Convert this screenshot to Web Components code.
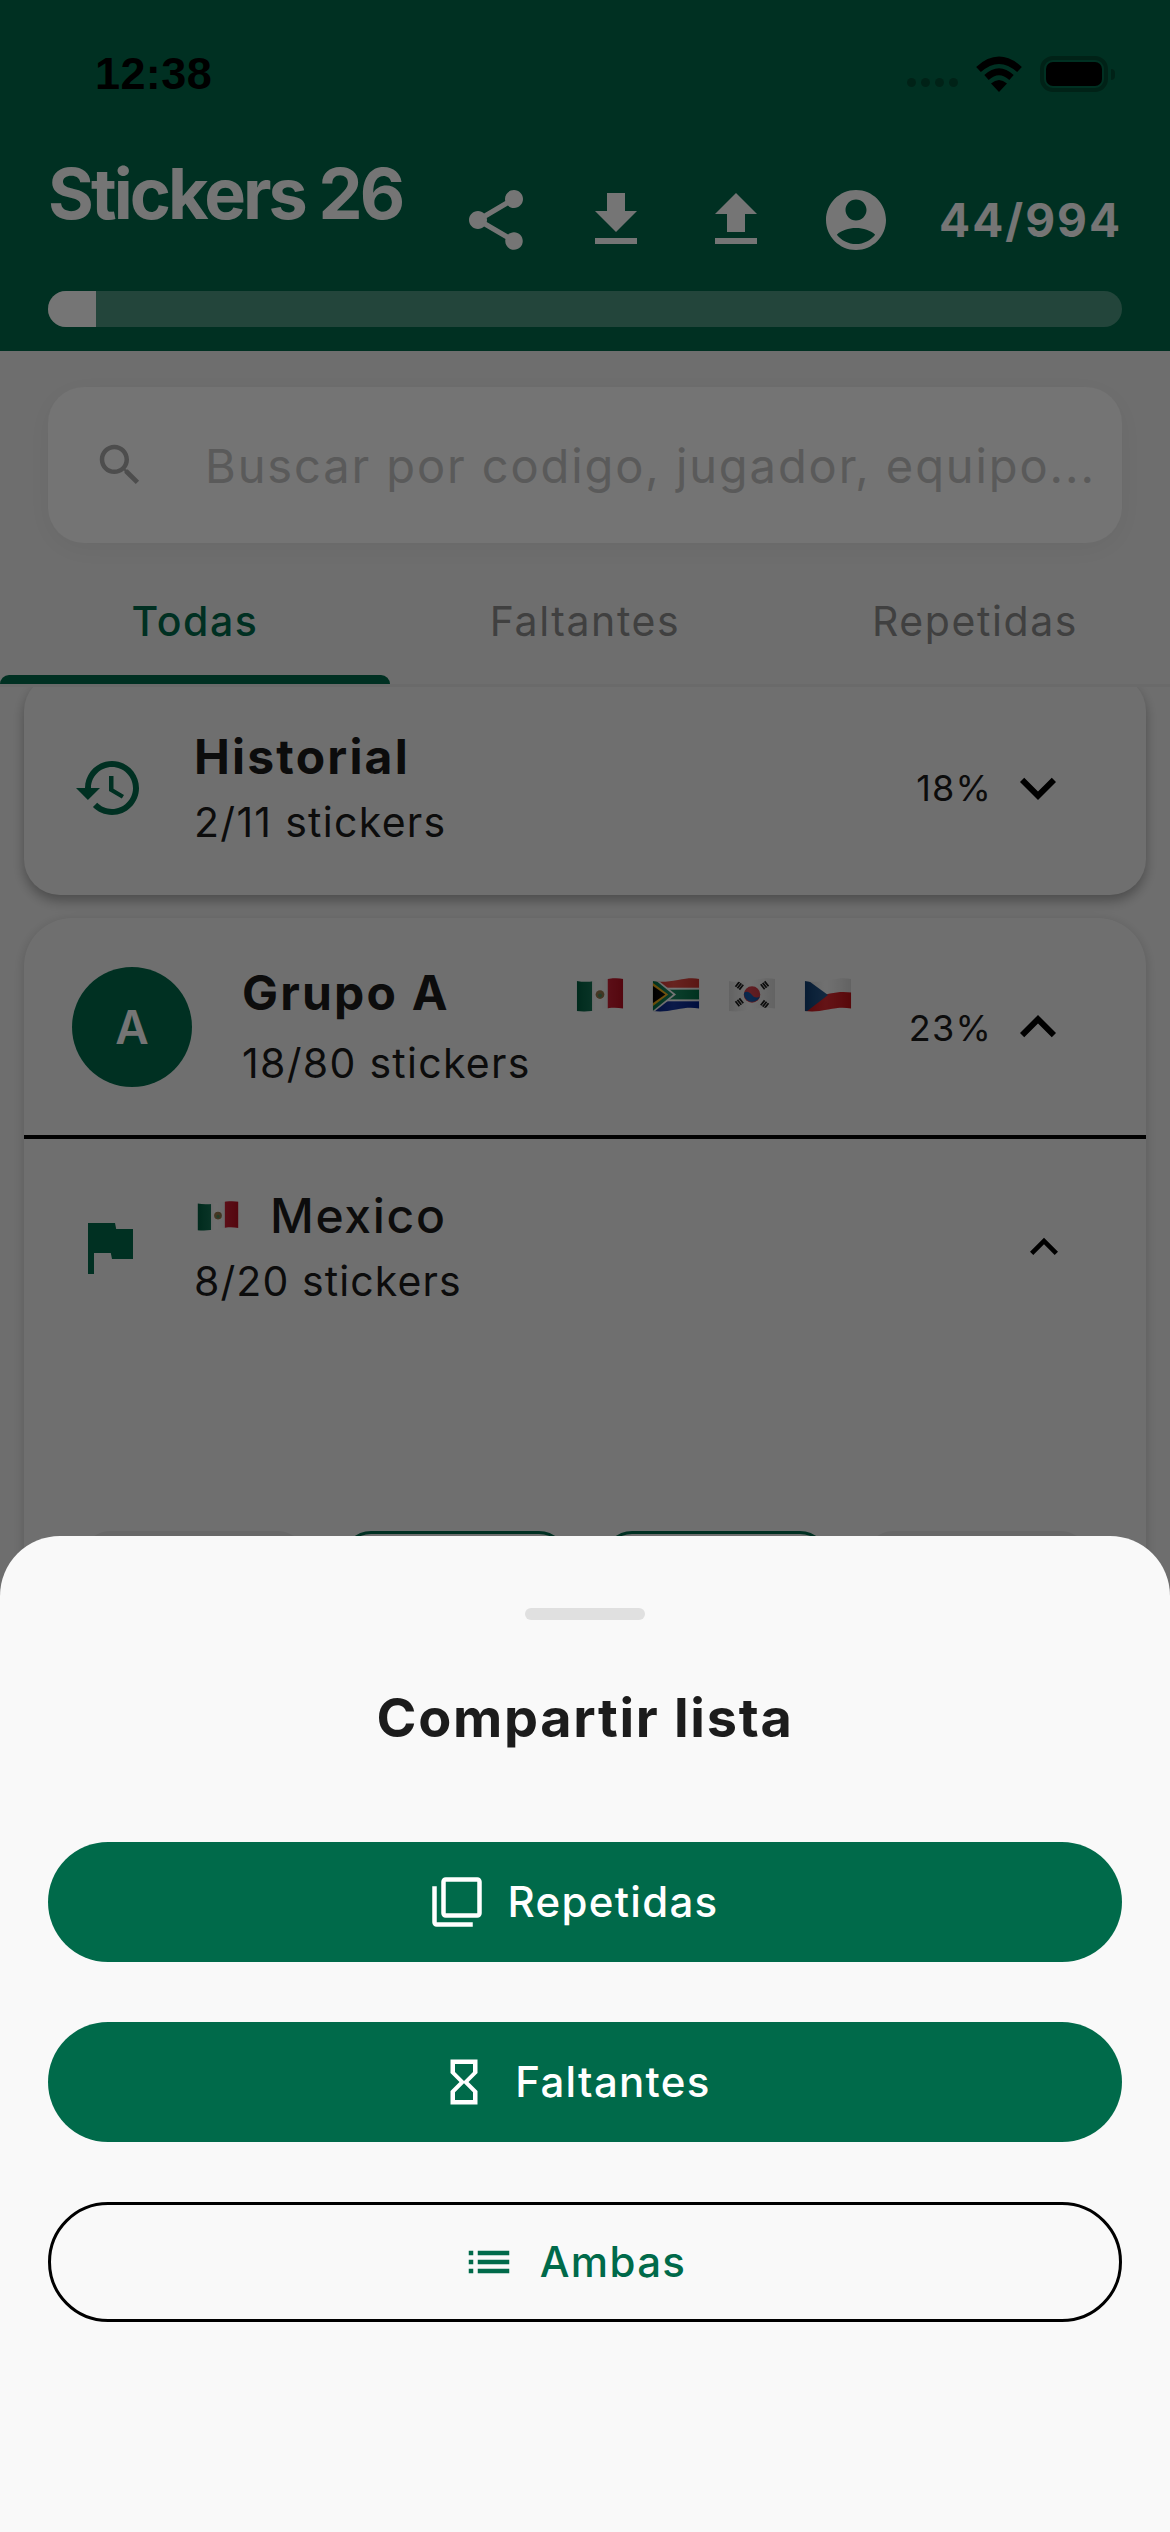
<!DOCTYPE html>
<html lang="es">
<head>
<meta charset="utf-8">
<title>Stickers 26</title>
<style>
  html, body { margin: 0; padding: 0; background: #f0f0f0; }
  body { font-family: Inter, "Liberation Sans", sans-serif; }
  #phone { position: relative; width: 1170px; height: 2532px; overflow: hidden; }
</style>
</head>
<body>
<div id="phone">
  <app-header title="Stickers 26" count="44/994" progress="48"></app-header>
  <search-field placeholder="Buscar por codigo, jugador, equipo..."></search-field>
  <tab-bar tabs="Todas,Faltantes,Repetidas"></tab-bar>
  <sticker-list>
    <history-card title="Historial" sub="2/11 stickers" pct="18%"></history-card>
    <group-card letter="A" title="Grupo A" sub="18/80 stickers" pct="23%">
      <flag-emoji slot="flags" code="mx"></flag-emoji>
      <flag-emoji slot="flags" code="za"></flag-emoji>
      <flag-emoji slot="flags" code="kr"></flag-emoji>
      <flag-emoji slot="flags" code="cz"></flag-emoji>
      <team-section title="Mexico" sub="8/20 stickers"></team-section>
    </group-card>
  </sticker-list>
  <dim-scrim></dim-scrim>
  <share-sheet title="Compartir lista">
    <sheet-button icon="filter_none" kind="filled">Repetidas</sheet-button>
    <sheet-button icon="hourglass" kind="filled">Faltantes</sheet-button>
    <sheet-button icon="list" kind="outlined">Ambas</sheet-button>
  </share-sheet>
</div>

<script>
const ICONS = {
  share: "M18 16.08c-.76 0-1.44.3-1.96.77L8.91 12.7c.05-.23.09-.46.09-.7s-.04-.47-.09-.7l7.05-4.11c.54.5 1.25.81 2.04.81 1.66 0 3-1.34 3-3s-1.34-3-3-3-3 1.34-3 3c0 .24.04.47.09.7L8.04 9.81C7.5 9.31 6.79 9 6 9c-1.66 0-3 1.34-3 3s1.34 3 3 3c.79 0 1.5-.31 2.04-.81l7.12 4.16c-.05.21-.08.43-.08.65 0 1.61 1.31 2.92 2.92 2.92s2.92-1.31 2.92-2.92-1.31-2.92-2.92-2.92z",
  download: "M19 9h-4V3H9v6H5l7 7 7-7zM5 18v2h14v-2H5z",
  upload: "M9 16h6v-6h4l-7-7-7 7h4zm-4 2h14v2H5z",
  account: "M12 2C6.48 2 2 6.48 2 12s4.48 10 10 10 10-4.48 10-10S17.52 2 12 2zm0 3.2c1.93 0 3.5 1.57 3.5 3.5S13.93 12.2 12 12.2 8.5 10.63 8.5 8.7 10.07 5.2 12 5.2zM12 20c-2.6 0-4.9-1.2-6.4-3.1 1.6-1.4 3.9-2.2 6.4-2.2s4.8.8 6.4 2.2C16.9 18.8 14.6 20 12 20z",
  search: "M15.5 14h-.79l-.28-.27C15.41 12.59 16 11.11 16 9.5 16 5.91 13.09 3 9.5 3S3 5.91 3 9.5 5.91 16 9.5 16c1.61 0 3.09-.59 4.23-1.57l.27.28v.79l5 4.99L20.49 19l-4.99-5zm-6 0C7.01 14 5 11.99 5 9.5S7.01 5 9.5 5 14 7.01 14 9.5 11.99 14 9.5 14z",
  history: "M13 3c-4.97 0-9 4.03-9 9H1l3.89 3.89.07.14L9 12H6c0-3.87 3.13-7 7-7s7 3.13 7 7-3.13 7-7 7c-1.93 0-3.68-.79-4.94-2.06l-1.42 1.42C8.27 19.99 10.51 21 13 21c4.97 0 9-4.03 9-9s-4.03-9-9-9zm-1 5v5l4.28 2.54.72-1.21-3.5-2.08V8H12z",
  expand_more: "M16.59 8.59L12 13.17 7.41 8.59 6 10l6 6 6-6z",
  expand_less: "M12 8l-6 6 1.41 1.41L12 10.83l4.59 4.58L18 14z",
  flag: "M14.4 6L14 4H5v17h2v-7h5.6l.4 2h7V6z",
  filter_none: "M3 5H1v16c0 1.1.9 2 2 2h16v-2H3V5zm18-4H7c-1.1 0-2 .9-2 2v14c0 1.1.9 2 2 2h14c1.1 0 2-.9 2-2V3c0-1.1-.9-2-2-2zm0 16H7V3h14v14z",
  hourglass: "M6 2v6h.01L6 8.01 10 12l-4 4 .01.01H6V22h12v-5.99h-.01L18 16l-4-4 4-3.99-.01-.01H18V2H6zm10 14.5V20H8v-3.5l4-4 4 4zm-4-5l-4-4V4h8v3.5l-4 4z",
  list: "M3 13h2v-2H3v2zm0 4h2v-2H3v2zm0-8h2V7H3v2zm4 4h14v-2H7v2zm0 4h14v-2H7v2zM7 7v2h14V7H7z"
};

class MatIcon extends HTMLElement {
  connectedCallback() {
    const size = this.getAttribute("size") || 72;
    const name = this.getAttribute("name");
    this.attachShadow({mode: "open"}).innerHTML = `
      <style>
        :host { display: block; width: ${size}px; height: ${size}px; flex: none; }
        svg { display: block; width: 100%; height: 100%; fill: currentColor; }
      </style>
      <svg viewBox="0 0 24 24"><path d="${ICONS[name]}"/></svg>`;
  }
}
customElements.define("mat-icon", MatIcon);

class StatusBar extends HTMLElement {
  connectedCallback() {
    this.attachShadow({mode: "open"}).innerHTML = `
      <style>
        :host { display: flex; align-items: center; justify-content: space-between; height: 148px; padding: 0 55px 0 95px; color: #000; }
        .time { font: bold 45px "Liberation Sans", sans-serif; letter-spacing: .4px; }
        .right { display: flex; align-items: center; }
        .dots { display: flex; gap: 5px; margin: 17px 17px 0 0; }
        .dots i { width: 9px; height: 9px; border-radius: 50%; background: rgba(0,0,0,.3); }
        .wifi { width: 48px; height: 36px; display: block; margin-right: 17px; }
        .batt { box-sizing: border-box; width: 68px; height: 36px; padding: 2px; border: 4px solid rgba(0,0,0,.3); border-radius: 13px; }
        .batt i { display: block; height: 100%; background: #000; border-radius: 7px; }
        .cap { width: 4px; height: 11px; margin-left: 3px; background: rgba(0,0,0,.3); border-radius: 0 6px 6px 0; }
      </style>
      <span class="time">12:38</span>
      <div class="right">
        <div class="dots"><i></i><i></i><i></i><i></i></div>
        <svg class="wifi" viewBox="0 0 48 36">
          <path d="M3.5 13.5Q24-5 44.500 13.500" fill="none" stroke="#000" stroke-width="7"/>
          <path d="M11.500 21.500Q24 10 36.500 21.500" fill="none" stroke="#000" stroke-width="6.500"/>
          <path d="M16 27.500Q24 20.500 32 27.500L24 36Z"/>
        </svg>
        <div class="batt"><i></i></div>
        <div class="cap"></div>
      </div>`;
  }
}
customElements.define("status-bar", StatusBar);

class AppHeader extends HTMLElement {
  connectedCallback() {
    const pct = this.getAttribute("progress");
    this.attachShadow({mode: "open"}).innerHTML = `
      <style>
        :host { display: block; height: 351px; background: #006a4a; color: #fff; }
        .row { display: flex; align-items: flex-start; height: 143px; padding: 0 48px; }
        h1 { margin: 12px 0 0; font: 700 70px/68px Inter, sans-serif; letter-spacing: -2.900px; }
        .actions { display: flex; align-items: center; margin: 36px 0 0 auto; }
        .btn { display: flex; justify-content: center; width: 120px; }
        .count { margin-left: 23px; font: 700 46px/72px Inter, sans-serif; letter-spacing: 2px; }
        .track { height: 36px; margin: 0 48px; border-radius: 18px; overflow: hidden; background: rgba(255,255,255,.3); }
        .fill { height: 100%; background: #fff; }
      </style>
      <status-bar></status-bar>
      <div class="row">
        <h1>${this.getAttribute("title")}</h1>
        <div class="actions">
          <div class="btn"><mat-icon name="share"></mat-icon></div>
          <div class="btn"><mat-icon name="download"></mat-icon></div>
          <div class="btn"><mat-icon name="upload"></mat-icon></div>
          <div class="btn"><mat-icon name="account"></mat-icon></div>
          <span class="count">${this.getAttribute("count")}</span>
        </div>
      </div>
      <div class="track"><div class="fill" style="width:${pct}px"></div></div>`;
  }
}
customElements.define("app-header", AppHeader);

class SearchField extends HTMLElement {
  connectedCallback() {
    this.attachShadow({mode: "open"}).innerHTML = `
      <style>
        :host { display: block; padding: 36px 48px 15px; }
        .box { display: flex; align-items: center; height: 156px; padding-left: 45px; border-radius: 36px; background: #fcfcfc; box-shadow: 0 6px 30px rgba(0,0,0,.05); color: #a8a8a8; }
        span { margin-left: 58px; font: 400 47px/1 Inter, sans-serif; letter-spacing: 1.900px; color: #c4c4c4; white-space: nowrap; }
      </style>
      <div class="box">
        <mat-icon name="search" size="54"></mat-icon>
        <span>${this.getAttribute("placeholder")}</span>
      </div>`;
  }
}
customElements.define("search-field", SearchField);

class TabBar extends HTMLElement {
  connectedCallback() {
    const tabs = this.getAttribute("tabs").split(",");
    this.attachShadow({mode: "open"}).innerHTML = `
      <style>
        :host { display: grid; grid-template-columns: repeat(3, 1fr); height: 126px; border-bottom: 3px solid #e6e6e6; }
        .tab { position: relative; display: flex; align-items: center; justify-content: center; font: 400 41px/1 Inter, sans-serif; letter-spacing: 1.600px; color: #8c8c8c; }
        .tab.on { color: #006a4a; font-weight: 500; }
        .tab.on::after { content: ""; position: absolute; left: 0; right: 0; bottom: 0; height: 9px; border-radius: 9px 9px 0 0; background: #006a4a; }
      </style>
      ${tabs.map((t, i) => `<div class="tab ${i === 0 ? "on" : ""}">${t}</div>`).join("")}`;
  }
}
customElements.define("tab-bar", TabBar);

class StickerList extends HTMLElement {
  connectedCallback() {
    this.attachShadow({mode: "open"}).innerHTML = `
      <style>
        :host { display: block; overflow: hidden; height: 1845px; }
        .scroll { display: flex; flex-direction: column; gap: 23px; margin-top: -12px; padding: 0 24px; }
      </style>
      <div class="scroll"><slot></slot></div>`;
  }
}
customElements.define("sticker-list", StickerList);

const TEXT_STYLES = `
  .texts { display: flex; flex-direction: column; color: #1c1c1c; }
  .title { font: 700 48px/60px Inter, sans-serif; letter-spacing: 2.200px; }
  .sub { margin-top: 6px; font: 400 41px/60px Inter, sans-serif; letter-spacing: 1.300px; }
  .pct { font: 400 36px/1 Inter, sans-serif; letter-spacing: 1.200px; color: #1c1c1c; }
`;

class HistoryCard extends HTMLElement {
  connectedCallback() {
    this.attachShadow({mode: "open"}).innerHTML = `
      <style>
        :host { box-sizing: border-box; display: flex; align-items: center; height: 220px; padding: 6px 72px 0 49px; border-radius: 36px; background: #f2f2f2; box-shadow: 0 6px 12px rgba(0,0,0,.3); }
        ${TEXT_STYLES}
        .texts { margin-left: 49px; padding-top: 3px; }
        .sub { margin-top: 5px; }
        .pct { margin-left: auto; margin-right: 10px; }
        .grn { color: #006a4a; }
      </style>
      <mat-icon class="grn" name="history"></mat-icon>
      <div class="texts">
        <span class="title">${this.getAttribute("title")}</span>
        <span class="sub">${this.getAttribute("sub")}</span>
      </div>
      <span class="pct">${this.getAttribute("pct")}</span>
      <mat-icon name="expand_more"></mat-icon>`;
  }
}
customElements.define("history-card", HistoryCard);

class GroupCard extends HTMLElement {
  connectedCallback() {
    this.attachShadow({mode: "open"}).innerHTML = `
      <style>
        :host { display: block; border-radius: 48px 48px 0 0; background: #f2f2f2; box-shadow: 0 3px 12px rgba(0,0,0,.18); }
        ${TEXT_STYLES}
        .head { display: flex; align-items: center; height: 217px; padding: 0 72px 0 48px; border-bottom: 4px solid #000; }
        .avatar { display: flex; align-items: center; justify-content: center; width: 120px; height: 120px; border-radius: 50%; background: #006a4a; color: #fff; font: 600 46px/1 Inter, sans-serif; flex: none; }
        .texts { width: 610px; margin-left: 50px; padding-top: 6px; }
        .sub { margin-top: 10px; }
        .top { display: flex; align-items: center; justify-content: space-between; margin-top: -3px; }
        .flags { display: flex; gap: 28px; margin-top: 4px; }
        .pct { margin: 3px 10px 0 auto; }
        mat-icon { margin-top: 1px; }
      </style>
      <div class="head">
        <div class="avatar">${this.getAttribute("letter")}</div>
        <div class="texts">
          <div class="top">
            <span class="title">${this.getAttribute("title")}</span>
            <div class="flags"><slot name="flags"></slot></div>
          </div>
          <span class="sub">${this.getAttribute("sub")}</span>
        </div>
        <span class="pct">${this.getAttribute("pct")}</span>
        <mat-icon name="expand_less"></mat-icon>
      </div>
      <slot></slot>`;
  }
}
customElements.define("group-card", GroupCard);

class TeamSection extends HTMLElement {
  connectedCallback() {
    this.attachShadow({mode: "open"}).innerHTML = `
      <style>
        :host { display: block; }
        ${TEXT_STYLES}
        .head { display: flex; align-items: center; height: 216px; padding: 0 74px 0 49px; }
        .grn { color: #006a4a; }
        .texts { margin-left: 49px; padding-top: 3px; }
        .top { display: flex; align-items: center; gap: 31px; padding-left: 3px; }
        .top .title { font-weight: 500; letter-spacing: 1.700px; }
        .sub { margin-top: 5px; letter-spacing: 1.100px; }
        .more { margin-left: auto; }
        .tiles { display: grid; grid-template-columns: repeat(4, 224px); gap: 37px; padding: 176px 0 0 58px; }
        .tile { box-sizing: border-box; height: 300px; border-radius: 28px; background: #e2e2e2; }
        .tile.have { border: 3px solid #006a4a; background: #f2f2f2; }
      </style>
      <div class="head">
        <mat-icon class="grn" name="flag"></mat-icon>
        <div class="texts">
          <div class="top">
            <flag-emoji code="mx" small></flag-emoji>
            <span class="title">${this.getAttribute("title")}</span>
          </div>
          <span class="sub">${this.getAttribute("sub")}</span>
        </div>
        <mat-icon class="more" name="expand_less" size="56"></mat-icon>
      </div>
      <div class="tiles">
        <div class="tile"></div><div class="tile have"></div><div class="tile have"></div><div class="tile"></div>
      </div>`;
  }
}
customElements.define("team-section", TeamSection);

// waved flag cloth, same outline for every country
const WAVE = "M0 3C8 4.500 16 4 26 2S42 0 48 1V31.500C40 30 34 30.500 24 32.500S8 35 0 34Z";
const FLAG_ART = {
  mx: `<rect width="16" height="36" fill="#006847"/><rect x="16" width="16" height="36" fill="#f4f4f4"/><rect x="32" width="16" height="36" fill="#ce1126"/>
       <circle cx="24" cy="17" r="4.500" fill="#8c6a3a"/><circle cx="24" cy="18" r="2" fill="#3d7a4a"/>`,
  za: `<rect width="48" height="12" fill="#de3831"/><rect y="20" width="48" height="16" fill="#002395"/>
       <rect y="10" width="48" height="14" fill="#fff"/><rect y="12" width="48" height="10" fill="#007a4d"/>
       <path d="M0-2L24 17 0 36Z" fill="#fff"/><path d="M0 0L21 17 0 34Z" fill="#007a4d"/>
       <path d="M0 5L16 17 0 29Z" fill="#ffb612"/><path d="M0 8L13 17 0 26Z" fill="#000"/>`,
  kr: `<rect width="48" height="36" fill="#f4f4f4"/>
       <circle cx="24" cy="17" r="8.500" fill="#cd2e3a"/><path d="M15.700 15.500A8.500 8.500 0 0 0 32.300 18.500C30 21 26 20.500 24 17.500S18 13 15.700 15.500Z" fill="#0047a0"/>
       <g stroke="#111" stroke-width="1.800" fill="none">
         <path d="M7 9l4-5M9 10.500l4-5M11 12l4-5"/><path d="M33 6.500l4 5M35 5l4 5M37 3.500l4 5"/>
         <path d="M7 24l4 5M9 22.500l4 5M11 21l4 5"/><path d="M33 28l4-5M35 29.500l4-5M37 31l4-5"/>
       </g>`,
  cz: `<rect width="48" height="36" fill="#f4f4f4"/><path d="M0 19.500C10 20 18 18 26 16S42 14 48 15V36H0Z" fill="#d7141a"/><path d="M0 0L24 17.500 0 36Z" fill="#11457e"/>`
};

class FlagEmoji extends HTMLElement {
  connectedCallback() {
    const small = this.hasAttribute("small");
    const w = small ? 42 : 48, h = small ? 30 : 34;
    this.attachShadow({mode: "open"}).innerHTML = `
      <style>
        :host { display: block; width: ${w}px; height: ${h}px; flex: none; }
        svg { display: block; width: 100%; height: 100%; }
      </style>
      <svg viewBox="0 0 48 35">
        <defs>
          <clipPath id="cloth"><path d="${WAVE}"/></clipPath>
          <linearGradient id="shade" x1="0" x2="1" y1="0" y2="0">
            <stop offset="0" stop-color="#000" stop-opacity=".12"/><stop offset=".45" stop-color="#fff" stop-opacity=".1"/>
            <stop offset="1" stop-color="#000" stop-opacity=".12"/>
          </linearGradient>
        </defs>
        <g clip-path="url(#cloth)">${FLAG_ART[this.getAttribute("code")]}<rect width="48" height="36" fill="url(#shade)"/></g>
      </svg>`;
  }
}
customElements.define("flag-emoji", FlagEmoji);

class DimScrim extends HTMLElement {
  connectedCallback() {
    this.attachShadow({mode: "open"}).innerHTML = `
      <style>:host { position: absolute; inset: 0; background: rgba(0,0,0,.54); }</style>`;
  }
}
customElements.define("dim-scrim", DimScrim);

class ShareSheet extends HTMLElement {
  connectedCallback() {
    this.attachShadow({mode: "open"}).innerHTML = `
      <style>
        :host { position: absolute; left: 0; right: 0; bottom: 0; height: 996px; box-sizing: border-box; display: flex; flex-direction: column; padding: 72px 48px 0; border-radius: 60px 60px 0 0; background: #f9f9f9; }
        .handle { align-self: center; width: 120px; height: 12px; border-radius: 6px; background: #e0e0e0; }
        h2 { margin: 64px 0 90px; font: 700 54px/68px Inter, sans-serif; letter-spacing: 1.700px; text-align: center; color: #1c1c1c; }
        .btns { display: flex; flex-direction: column; gap: 60px; }
      </style>
      <div class="handle"></div>
      <h2>${this.getAttribute("title")}</h2>
      <div class="btns"><slot></slot></div>`;
  }
}
customElements.define("share-sheet", ShareSheet);

class SheetButton extends HTMLElement {
  connectedCallback() {
    const outlined = this.getAttribute("kind") === "outlined";
    this.attachShadow({mode: "open"}).innerHTML = `
      <style>
        :host { box-sizing: border-box; display: flex; align-items: center; justify-content: center; gap: 24px; height: 120px; padding-right: 22px; border-radius: 60px;
          font: 500 42px/1 Inter, sans-serif; letter-spacing: 1.300px;
          background: ${outlined ? "transparent" : "#006a4a"};
          color: ${outlined ? "#006a4a" : "#fff"};
          border: ${outlined ? "3px solid #000" : "none"}; }
      </style>
      <mat-icon name="${this.getAttribute("icon")}" size="54"></mat-icon>
      <span><slot></slot></span>`;
  }
}
customElements.define("sheet-button", SheetButton);
</script>
</body>
</html>
